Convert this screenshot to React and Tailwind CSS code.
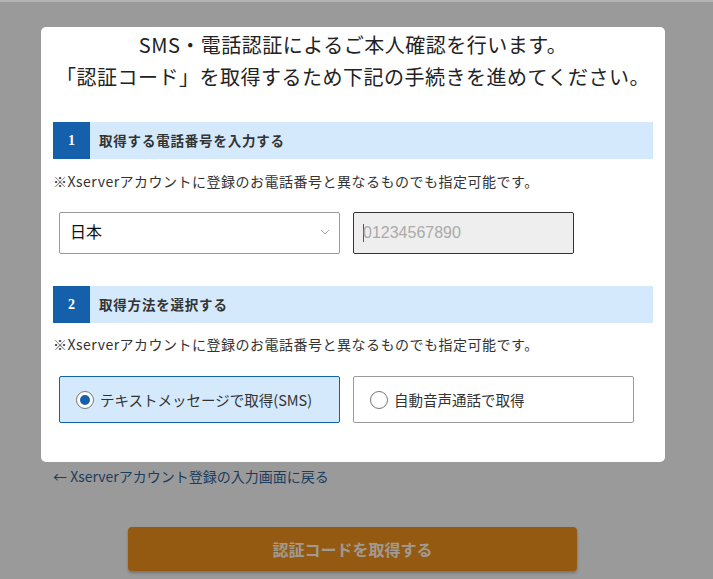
import React, { useState } from 'react';

const FONT = { fontFamily: '"Noto Sans CJK JP", "Noto Sans", sans-serif' };

function SectionHeader({ num, title }) {
  return (
    <div className="flex h-[37px] items-stretch bg-[#d5e9fc]">
      <div className="flex w-[37px] items-center justify-center bg-[#1560aa] text-[14px] font-bold text-white" style={{ fontFamily: '"Liberation Serif", serif' }}>
        {num}
      </div>
      <div className="flex items-center pl-[9px] text-[13.5px] font-bold tracking-[0.8px] text-[#333]">{title}</div>
    </div>
  );
}

function Radio({ checked, label, onClick }) {
  return (
    <button
      type="button"
      onClick={onClick}
      className={
        'flex h-[47px] w-[281px] items-center gap-[6px] rounded-[2px] border pl-[16px] text-left text-[14.5px] text-[#333] ' +
        (checked ? 'border-[#1560aa] bg-[#d5e9fc]' : 'border-[#9a9a9a] bg-white')
      }
    >
      <span className="flex h-[18px] w-[18px] items-center justify-center rounded-full border-[1.5px] border-[#777] bg-white">
        {checked && <span className="h-[10px] w-[10px] rounded-full bg-[#1560aa]" />}
      </span>
      {label}
    </button>
  );
}

export default function App() {
  const [method, setMethod] = useState('sms');
  const note = '※Xserverアカウントに登録のお電話番号と異なるものでも指定可能です。';

  return (
    <div className="min-h-screen border-t-2 border-[#b3b3b3] bg-[#9a9a9a] pt-[25px]" style={FONT}>
      <div className="ml-[41px] w-[624px] rounded-[5px] bg-white px-[12px] pb-[39px] pt-[2px]">
        <div className="text-center text-[20px] leading-[32px] tracking-[0.5px] text-[#222]">
          <p>SMS・電話認証によるご本人確認を行います。</p>
          <p>「認証コード」を取得するため下記の手続きを進めてください。</p>
        </div>

        <div className="mt-[29px]">
          <SectionHeader num="1" title="取得する電話番号を入力する" />
          <p className="mt-[11px] text-[14px] leading-[22px] tracking-[0.5px] text-[#333]">{note}</p>
          <div className="mt-[20px] flex gap-[13px] pl-[6px]">
            <div className="relative flex h-[42px] w-[281px] items-center rounded-[2px] border border-[#9a9a9a] bg-white pb-[4px] pl-[10px] text-[16px] text-[#111]">
              日本
              <svg className="absolute right-[9px] top-[16px]" width="10" height="6" viewBox="0 0 10 6" fill="none">
                <path d="M1 1l4 4 4-4" stroke="#aaa" strokeWidth="1" />
              </svg>
            </div>
            <div className="relative flex h-[42px] w-[221px] items-center rounded-[2px] border border-[#333] bg-[#eeeeee] pl-[9px] text-[16px] text-[#aaa]" style={{ fontFamily: '"Liberation Sans", Arial, sans-serif' }}>
              <span className="mr-[-1px] h-[18px] w-px bg-[#555]" />
              01234567890
            </div>
          </div>
        </div>

        <div className="mt-[32px]">
          <SectionHeader num="2" title="取得方法を選択する" />
          <p className="mt-[10px] text-[14px] leading-[22px] tracking-[0.5px] text-[#333]">{note}</p>
          <div className="mt-[21px] flex gap-[13px] pl-[6px]">
            <Radio checked={method === 'sms'} label="テキストメッセージで取得(SMS)" onClick={() => setMethod('sms')} />
            <Radio checked={method === 'voice'} label="自動音声通話で取得" onClick={() => setMethod('voice')} />
          </div>
        </div>
      </div>

      <div className="ml-[53px] mt-[4px] text-[14px] leading-[20px] text-[#1d3d5e]">
        ← Xserverアカウント登録の入力画面に戻る
      </div>

      <div className="mt-[41px] flex justify-center">
        <button type="button" className="ml-[-8px] h-[44px] w-[449px] rounded-[4px] bg-[#955a12] text-[16px] font-bold text-[#a09a93] shadow-[0_2px_3px_rgba(0,0,0,0.25)]">
          認証コードを取得する
        </button>
      </div>
    </div>
  );
}
